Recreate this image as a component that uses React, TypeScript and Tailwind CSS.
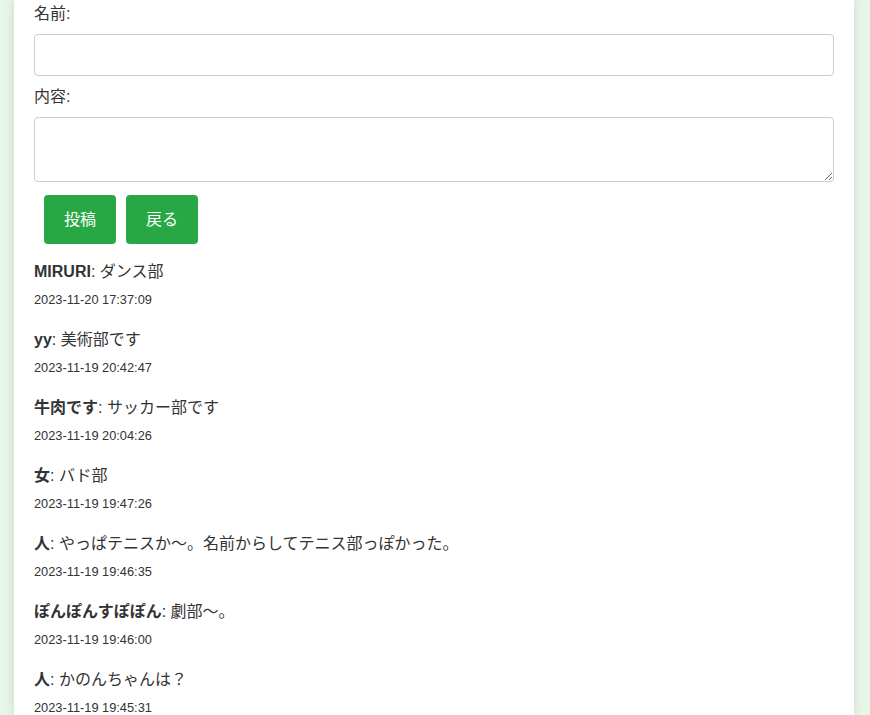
import React from 'react';

interface Post {
  name: string;
  content: string;
  time: string;
}

const posts: Post[] = [
  { name: 'MIRURI', content: 'ダンス部', time: '2023-11-20 17:37:09' },
  { name: 'yy', content: '美術部です', time: '2023-11-19 20:42:47' },
  { name: '牛肉です', content: 'サッカー部です', time: '2023-11-19 20:04:26' },
  { name: '女', content: 'バド部', time: '2023-11-19 19:47:26' },
  { name: '人', content: 'やっぱテニスか～。名前からしてテニス部っぽかった。', time: '2023-11-19 19:46:35' },
  { name: 'ぽんぽんすぽぽん', content: '劇部～。', time: '2023-11-19 19:46:00' },
  { name: '人', content: 'かのんちゃんは？', time: '2023-11-19 19:45:31' },
];

const App: React.FC = () => {
  return (
    <div
      className="h-[715px] overflow-hidden bg-[#e8f5e9] text-[#333]"
      style={{ fontFamily: '"Liberation Sans", Arial, "Noto Sans CJK JP", sans-serif' }}
    >
      <div className="ml-[14px] h-full w-[840px] bg-white px-5 pt-[5px] shadow-[0_0_10px_rgba(0,0,0,0.12)]">
        <form className="flex flex-col" onSubmit={event => event.preventDefault()}>
          <label className="mb-[11px] block text-[16px] leading-[18px]">名前:</label>
          <input
            type="text"
            className="mb-[12px] h-[42px] w-full rounded-[4px] border border-[#ccc] px-[10px] text-[16px] outline-none"
          />
          <label className="mb-[11px] block text-[16px] leading-[18px]">内容:</label>
          <textarea className="h-[65px] w-full rounded-[4px] border border-[#ccc] px-[10px] py-[10px] text-[16px] outline-none" />
          <div className="mt-[13px] flex gap-[10px] pl-[10px]">
            <button type="submit" className="h-[49px] w-[72px] rounded-[4px] bg-[#28a745] text-[16px] text-white">
              投稿
            </button>
            <button type="button" className="h-[49px] w-[72px] rounded-[4px] bg-[#28a745] text-[16px] text-white">
              戻る
            </button>
          </div>
        </form>

        <div className="mt-[16px]">
          {posts.map((post, index) => (
            <div key={index} className="mb-[20px]">
              <p className="text-[16px] leading-[24px]">
                <strong className="font-bold">{post.name}</strong>: {post.content}
              </p>
              <p className="mt-[8px] text-[12.8px] leading-[16px]">{post.time}</p>
            </div>
          ))}
        </div>
      </div>
    </div>
  );
};

export default App;
